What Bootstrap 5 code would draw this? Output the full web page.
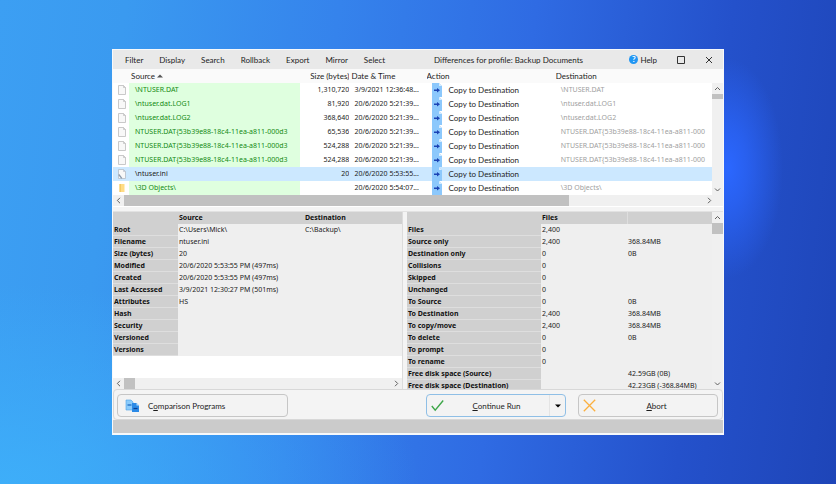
<!DOCTYPE html>
<html lang="en">
<head>
<meta charset="utf-8">
<meta name="viewport" content="width=device-width, initial-scale=1">
<title>Differences for profile: Backup Documents</title>
<link href="https://cdn.jsdelivr.net/npm/bootstrap@5.3.0/dist/css/bootstrap.min.css" rel="stylesheet">
<style>
body{font-family:Lato,"Noto Sans",sans-serif;font-size:8px;line-height:12px;color:#1c1c1c;min-height:100vh;padding:49px 112px;
background:
radial-gradient(ellipse 55px 110px at 728px 168px,#2b67ff 0,rgba(43,103,255,.7) 35%,rgba(43,103,255,0) 100%),
radial-gradient(ellipse 420px 200px at 0 100%,rgba(62,176,250,.9),rgba(62,176,250,0)),
linear-gradient(97deg,#3c9ff3 0,#3a9af0 14%,#3583ec 38%,#2f6be3 60%,#2451cb 82%,#1e45b8 100%)}
button{font:inherit;color:inherit;background:none;border:0;padding:0}
svg{display:block;flex:none}
table{table-layout:fixed;width:100%;border-collapse:separate!important;border-spacing:0}
td,th{padding:0;overflow:hidden;white-space:nowrap}
.win{background:#f0f0f0;border:1px solid #f7f9fb;border-bottom-width:2px}
.titlebar{height:19px;background:#e9e9e9;padding:0 10px 0 12px}
.menu{gap:16px;flex:0 0 309px}
.tools{gap:20px}
.help{gap:2px}
.ask{color:#fff;background:#2196f3;width:9px;height:9px;line-height:9px;font-weight:700;border-radius:50%;text-align:center}
.files{background:#fff}
.files tr{height:14px;line-height:14px}
.files thead tr,.headcap{background:#fafafa}
.headcap{height:14px}
.files th{font-weight:400}
.files td,.info td,.info th{font-family:"Noto Sans","Open Sans",sans-serif;font-size:7px}
.files td:nth-child(2){background:#dfffdf;color:#148a14;padding-left:6px;border-right:2px solid #dfffdf}
.files td:nth-child(3){text-align:right}
.files td:nth-child(4){padding-left:5px}
.files td:nth-child(6){padding-left:2px;font-family:Lato,"Noto Sans",sans-serif;font-size:8px}
.files td:nth-child(7){color:#a0a0a0;padding-left:5px}
.files tr.picked td{background:#cce8ff;color:#1c1c1c;border-color:#cce8ff}
.files td svg{margin-left:5px}
.vbar{width:11px;background:#f0f0f0;color:#606060;flex:none}
.hbar{height:11px;background:#f0f0f0;color:#606060}
.vbar button,.hbar button{width:11px;height:11px;display:flex;align-items:center;justify-content:center;flex:none}
.thumb{background:#c1c1c1}
.short{height:5px}
.tall{height:11px}
.tiny{width:11px}
.long{width:74%}
.split{height:6px;background:#f4f4f4;border-top:1px solid #fff;border-bottom:1px solid #e2e2e2}
.panes{height:177px;overflow:hidden}
.left{flex:290 1 0;background:#fff;border-right:1px solid #dcdcdc}
.right{flex:317 1 0;background:#efefef}
.info{align-self:flex-start}
.info tr{height:12px;line-height:12px;background:#efefef}
.info th{background:#d0d0d0;color:#111;padding-left:1px;font-weight:700}
.info tbody th{box-shadow:inset 0 -1px #dedede}
.info td{padding-left:1px}
.info th.edge{border-left:1px solid #dedede}
.gutter{width:4px;background:#f4f4f4}
.actions{border:1px solid #d8d8d8;border-radius:4px;background:#f4f4f4;padding:4px 4px 4px 3px;gap:12px;height:31px}
.cmd{height:23px;border:1px solid #c6c6c6;border-radius:4px;background:#f3f3f3;display:flex;align-items:center}
.cmd.main{border-color:#8fbfe6}
.cmd span{flex:1;text-align:center}
.compare{width:171px;padding-left:7px}
.wide{width:140px}
.drop{width:16px;border-left:1px solid #e4e4e4}
.status{height:13px;background:#cbcbcb}
</style>
<script src="https://cdn.jsdelivr.net/npm/bootstrap@5.3.0/dist/js/bootstrap.bundle.min.js"></script>
</head>
<body>
<svg width="0" height="0" class="position-absolute">
<symbol id="doc" viewBox="0 0 8 10"><path d="M.5.5h5l2 2v7h-7z" fill="#f8f8f8" stroke="#bcbcbc" stroke-width=".8"/><path d="M5.500.5v2h2" fill="none" stroke="#bcbcbc" stroke-width=".7"/></symbol>
<symbol id="ini" viewBox="0 0 8 10"><path d="M.5.5h5l2 2v7h-7z" fill="#f8f8f8" stroke="#b4bcc8" stroke-width=".8"/><path d="M5.500.5v2h2" fill="none" stroke="#b4bcc8" stroke-width=".7"/><path d="M.8 5.500l3 3.800" stroke="#8a9aac" stroke-width="1.300"/></symbol>
<symbol id="folder" viewBox="0 0 8 10"><path d="M1.500 1h5v8h-5z" fill="#ffdc85"/><path d="M1.500 1h1.500v8h-1.500z" fill="#f3c965"/></symbol>
<symbol id="copy" viewBox="0 0 10 14"><path d="M0 0h7l3 3v11H0z" fill="#8cc8fc"/><path d="M7 0v3h3z" fill="#d6ecff"/><path d="M2 6.500h3V5l3 2.300-3 2.300V8H2z" fill="#1b43b4"/></symbol>
<symbol id="up" viewBox="0 0 7 7"><path d="M1 5l2.500-2.500L6 5" fill="none" stroke="currentColor"/></symbol>
<symbol id="down" viewBox="0 0 7 7"><path d="M1 2.500L3.500 5 6 2.500" fill="none" stroke="currentColor"/></symbol>
<symbol id="lt" viewBox="0 0 7 7"><path d="M5 .8L2.300 3.500 5 6.200" fill="none" stroke="currentColor"/></symbol>
<symbol id="gt" viewBox="0 0 7 7"><path d="M2 .8l2.700 2.700L2 6.200" fill="none" stroke="currentColor"/></symbol>
</svg>
<main class="win">
<header class="titlebar d-flex align-items-center">
<nav class="menu d-flex"><button>Filter</button><button>Display</button><button>Search</button><button>Rollback</button><button>Export</button><button>Mirror</button><button>Select</button></nav>
<div class="flex-grow-1">Differences for profile: Backup Documents</div>
<div class="tools d-flex align-items-center">
<button class="help d-flex align-items-center"><span class="ask">?</span>Help</button>
<button aria-label="Maximize"><svg width="8" height="8" viewBox="0 0 8 8"><path d="M.5.5h7v7h-7z" fill="none" stroke="#333"/></svg></button>
<button aria-label="Close"><svg width="8" height="8" viewBox="0 0 8 8"><path d="M1 1l6 6M7 1L1 7" stroke="#333" fill="none"/></svg></button>
</div>
</header>
<section>
<div class="d-flex files">
<table>
<colgroup><col style="width:16px"><col style="width:171px"><col style="width:49px"><col style="width:77px"><col style="width:20px"><col style="width:109px"><col style="width:156px"></colgroup>
<thead><tr><th></th><th><span class="d-flex align-items-center">&nbsp;Source&nbsp;<svg width="6" height="4" viewBox="0 0 6 4"><path d="M0 3.500L3 .5l3 3z" fill="#555"/></svg></span></th><th class="text-end">Size (bytes)</th><th>&nbsp;Date &amp; Time</th><th colspan="2">Action</th><th>Destination</th></tr></thead>
<tbody>
<tr><td><svg width="8" height="10"><use href="#doc"/></svg></td><td>\NTUSER.DAT</td><td>1,310,720</td><td>3/9/2021 12:36:48...</td><td><svg width="10" height="14"><use href="#copy"/></svg></td><td>Copy to Destination</td><td>\NTUSER.DAT</td></tr>
<tr><td><svg width="8" height="10"><use href="#doc"/></svg></td><td>\ntuser.dat.LOG1</td><td>81,920</td><td>20/6/2020 5:21:39...</td><td><svg width="10" height="14"><use href="#copy"/></svg></td><td>Copy to Destination</td><td>\ntuser.dat.LOG1</td></tr>
<tr><td><svg width="8" height="10"><use href="#doc"/></svg></td><td>\ntuser.dat.LOG2</td><td>368,640</td><td>20/6/2020 5:21:39...</td><td><svg width="10" height="14"><use href="#copy"/></svg></td><td>Copy to Destination</td><td>\ntuser.dat.LOG2</td></tr>
<tr><td><svg width="8" height="10"><use href="#doc"/></svg></td><td>NTUSER.DAT{53b39e88-18c4-11ea-a811-000d3</td><td>65,536</td><td>20/6/2020 5:21:39...</td><td><svg width="10" height="14"><use href="#copy"/></svg></td><td>Copy to Destination</td><td>NTUSER.DAT{53b39e88-18c4-11ea-a811-000</td></tr>
<tr><td><svg width="8" height="10"><use href="#doc"/></svg></td><td>NTUSER.DAT{53b39e88-18c4-11ea-a811-000d3</td><td>524,288</td><td>20/6/2020 5:21:39...</td><td><svg width="10" height="14"><use href="#copy"/></svg></td><td>Copy to Destination</td><td>NTUSER.DAT{53b39e88-18c4-11ea-a811-000</td></tr>
<tr><td><svg width="8" height="10"><use href="#doc"/></svg></td><td>NTUSER.DAT{53b39e88-18c4-11ea-a811-000d3</td><td>524,288</td><td>20/6/2020 5:21:39...</td><td><svg width="10" height="14"><use href="#copy"/></svg></td><td>Copy to Destination</td><td>NTUSER.DAT{53b39e88-18c4-11ea-a811-000</td></tr>
<tr class="picked"><td><svg width="8" height="10"><use href="#ini"/></svg></td><td>\ntuser.ini</td><td>20</td><td>20/6/2020 5:53:55...</td><td><svg width="10" height="14"><use href="#copy"/></svg></td><td>Copy to Destination</td><td></td></tr>
<tr><td><svg width="8" height="10"><use href="#folder"/></svg></td><td>\3D Objects\</td><td></td><td>20/6/2020 5:54:07...</td><td><svg width="10" height="14"><use href="#copy"/></svg></td><td>Copy to Destination</td><td>\3D Objects\</td></tr>
</tbody></table>
<div class="d-flex flex-column">
<div class="headcap"></div>
<div class="vbar d-flex flex-column flex-grow-1"><button aria-label="Scroll up"><svg width="7" height="7"><use href="#up"/></svg></button><div class="thumb short"></div><button class="mt-auto" aria-label="Scroll down"><svg width="7" height="7"><use href="#down"/></svg></button></div>
</div></div>
<div class="hbar d-flex pe-2"><button aria-label="Scroll left"><svg width="7" height="7"><use href="#lt"/></svg></button><div class="thumb long"></div><button class="ms-auto" aria-label="Scroll right"><svg width="7" height="7"><use href="#gt"/></svg></button></div>
</section>
<div class="split"></div>
<section class="panes d-flex">
<div class="left d-flex flex-column">
<table class="info">
<colgroup><col style="width:65px"><col style="width:126px"><col style="width:98px"></colgroup>
<thead><tr><th></th><th>Source</th><th>Destination</th></tr></thead>
<tbody>
<tr><th>Root</th><td>C:\Users\Mick\</td><td>C:\Backup\</td></tr>
<tr><th>Filename</th><td>ntuser.ini</td><td></td></tr>
<tr><th>Size (bytes)</th><td>20</td><td></td></tr>
<tr><th>Modified</th><td>20/6/2020 5:53:55 PM (497ms)</td><td></td></tr>
<tr><th>Created</th><td>20/6/2020 5:53:55 PM (497ms)</td><td></td></tr>
<tr><th>Last Accessed</th><td>3/9/2021 12:30:27 PM (501ms)</td><td></td></tr>
<tr><th>Attributes</th><td>HS</td><td></td></tr>
<tr><th>Hash</th><td></td><td></td></tr>
<tr><th>Security</th><td></td><td></td></tr>
<tr><th>Versioned</th><td></td><td></td></tr>
<tr><th>Versions</th><td></td><td></td></tr>
</tbody></table>
<div class="hbar d-flex mt-auto"><button aria-label="Scroll left"><svg width="7" height="7"><use href="#lt"/></svg></button><div class="thumb tiny"></div><button class="ms-auto" aria-label="Scroll right"><svg width="7" height="7"><use href="#gt"/></svg></button></div>
</div>
<div class="gutter"></div>
<div class="right d-flex">
<table class="info">
<colgroup><col style="width:134px"><col style="width:86px"><col style="width:85px"></colgroup>
<thead><tr><th></th><th>Files</th><th class="edge"></th></tr></thead>
<tbody>
<tr><th>Files</th><td>2,400</td><td></td></tr>
<tr><th>Source only</th><td>2,400</td><td>368.84MB</td></tr>
<tr><th>Destination only</th><td>0</td><td>0B</td></tr>
<tr><th>Collisions</th><td>0</td><td></td></tr>
<tr><th>Skipped</th><td>0</td><td></td></tr>
<tr><th>Unchanged</th><td>0</td><td></td></tr>
<tr><th>To Source</th><td>0</td><td>0B</td></tr>
<tr><th>To Destination</th><td>2,400</td><td>368.84MB</td></tr>
<tr><th>To copy/move</th><td>2,400</td><td>368.84MB</td></tr>
<tr><th>To delete</th><td>0</td><td>0B</td></tr>
<tr><th>To prompt</th><td>0</td><td></td></tr>
<tr><th>To rename</th><td>0</td><td></td></tr>
<tr><th>Free disk space (Source)</th><td></td><td>42.59GB (0B)</td></tr>
<tr><th>Free disk space (Destination)</th><td></td><td>42.23GB (-368.84MB)</td></tr>
</tbody></table>
<div class="vbar d-flex flex-column"><button aria-label="Scroll up"><svg width="7" height="7"><use href="#up"/></svg></button><div class="thumb tall"></div><button class="mt-auto" aria-label="Scroll down"><svg width="7" height="7"><use href="#down"/></svg></button></div>
</div>
</section>
<footer>
<div class="actions d-flex">
<button class="cmd compare me-auto"><svg width="15" height="14" viewBox="0 0 15 14"><path d="M1 1h5l2 2v8H1z" fill="#8bcbfb" stroke="#4aa3e8" stroke-width=".6"/><path d="M2.500 6h4" stroke="#1565c0" stroke-width="1.200"/><path d="M7 4h4.500L14 6.500V13H7z" fill="#2b8ae6"/><path d="M11.500 4v2.500H14z" fill="#b9dffd"/><path d="M8.500 9.500h4" stroke="#0b3f91" stroke-width="1.200"/></svg><div class="ms-2">C<u>o</u>mparison Programs</div></button>
<div class="cmd main wide"><button class="d-flex align-items-center flex-grow-1 h-100 ps-1"><svg width="13" height="13" viewBox="0 0 13 13"><path d="M.8 7l3.400 4.200L12.200 1.500" fill="none" stroke="#3da648" stroke-width="1.400"/></svg><span><u>C</u>ontinue Run</span></button><button class="drop d-flex align-items-center justify-content-center h-100" aria-label="More run options"><svg width="6" height="4" viewBox="0 0 6 4"><path d="M0 .5h6L3 3.500z" fill="#000"/></svg></button></div>
<button class="cmd wide ps-1"><svg width="13" height="13" viewBox="0 0 13 13"><path d="M.8.8l11.400 11.400M12.200.8L.8 12.200" fill="none" stroke="#fbb040" stroke-width="1.300"/></svg><span><u>A</u>bort</span></button>
</div>
<div class="status"></div>
</footer>
</main>
</body>
</html>
